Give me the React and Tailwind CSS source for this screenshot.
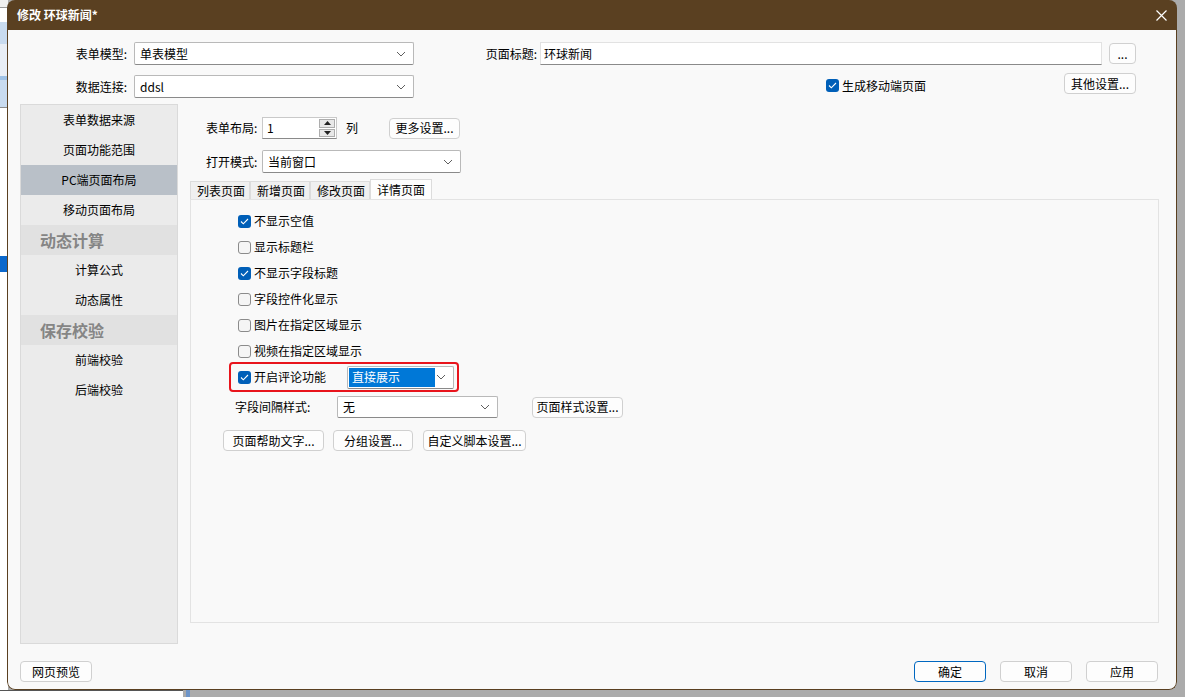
import React from 'react';

const Chevron = () => (
  <svg width="10" height="6" viewBox="0 0 10 6" className="shrink-0">
    <polyline points="1,1 5,5 9,1" fill="none" stroke="#5f5f5f" strokeWidth="1" />
  </svg>
);

const Check = ({ checked }) =>
  checked ? (
    <span className="w-[13px] h-[13px] rounded-[3px] bg-[#005fb8] flex items-center justify-center shrink-0">
      <svg width="9" height="7" viewBox="0 0 9 7">
        <polyline points="1,3.5 3.3,5.8 8,1" fill="none" stroke="#ffffff" strokeWidth="1.1" />
      </svg>
    </span>
  ) : (
    <span className="w-[13px] h-[13px] rounded-[3px] border border-[#8b8b8b] bg-[#f5f5f5] shrink-0" />
  );

const Select = ({ value, w, h = 'h-[23px]', children }) => (
  <div className={`${w} ${h} bg-white border border-[#b9b9b9] border-b-[#8a8a8a] rounded-[2px] flex items-center justify-between pl-[5px] pr-[7px] shrink-0`}>
    {children || <span>{value}</span>}
    <Chevron />
  </div>
);

const Btn = ({ children, w, primary }) => (
  <button
    className={`${w} h-[21px] rounded-[4px] bg-[#fdfdfd] border ${primary ? 'border-[#0067c0]' : 'border-[#d0d0d0]'} flex items-center justify-center text-[12px] text-black shrink-0`}
  >
    {children}
  </button>
);

const sideItems = [
  { t: '表单数据来源' },
  { t: '页面功能范围' },
  { t: 'PC端页面布局', active: true },
  { t: '移动页面布局' },
  { t: '动态计算', head: true },
  { t: '计算公式' },
  { t: '动态属性' },
  { t: '保存校验', head: true },
  { t: '前端校验' },
  { t: '后端校验' },
];

const checks = [
  { t: '不显示空值', c: true },
  { t: '显示标题栏', c: false },
  { t: '不显示字段标题', c: true },
  { t: '字段控件化显示', c: false },
  { t: '图片在指定区域显示', c: false },
  { t: '视频在指定区域显示', c: false },
];

export default function App() {
  return (
    <div
      className="w-[1185px] h-[697px] relative overflow-hidden bg-[#ababab] text-[12px] text-black"
      style={{ fontFamily: '"Noto Sans CJK SC", "Noto Sans", sans-serif' }}
    >
      {/* app behind the dialog */}
      <div className="absolute left-0 top-0 w-[8px] h-[697px] bg-white flex flex-col">
        <div className="h-[8px] border-b border-[#9a9a9a] bg-[#f0f0f0]" />
        <div className="h-[14px] bg-white" />
        <div className="h-[22px] bg-[#c9dbef]" />
        <div className="h-[32px] bg-[#e9eef5]" />
        <div className="h-[4px] bg-[#9fc2e6]" />
        <div className="h-[28px] bg-[#c9dbef] border-b border-[#8c8c8c]" />
        <div className="h-[148px] bg-white" />
        <div className="h-[16px] bg-[#0b68cc]" />
      </div>
      <div className="absolute left-0 top-[690px] w-[183px] h-[7px] bg-white border-t border-[#555]" />
      <div className="absolute left-[186px] top-[690px] w-[4px] h-[7px] bg-[#6e95c8]" />

      {/* dialog window */}
      <div className="absolute left-[7px] top-0 w-[1170px] h-[690px] flex flex-col rounded-t-[8px] rounded-b-[8px] overflow-hidden">
        <div className="h-[30px] bg-[#5a4021] flex items-center justify-between pl-[10px] pr-[10px] shrink-0">
          <span className="text-white font-bold text-[12px]">修改 环球新闻*</span>
          <svg width="11" height="11" viewBox="0 0 11 11">
            <path d="M0.5 0.5 L10.5 10.5 M10.5 0.5 L0.5 10.5" stroke="#ffffff" strokeWidth="1.2" />
          </svg>
        </div>

        <div className="flex-1 bg-[#f9f9f9] border-x border-b border-[#5a4021] rounded-b-[8px] flex flex-col pt-[12px]">
          {/* row 1 */}
          <div className="flex items-center h-[23px]">
            <span className="w-[119px] text-right">表单模型:</span>
            <span className="ml-[7px]"><Select value="单表模型" w="w-[280px]" /></span>
            <span className="w-[123px] text-right">页面标题:</span>
            <div className="ml-[3px] w-[562px] h-[23px] bg-white border border-[#e2e2e2] border-b-[#8a8a8a] flex items-center pl-[3px]">环球新闻</div>
            <span className="ml-[7px]"><Btn w="w-[27px]">...</Btn></span>
          </div>
          {/* row 2 */}
          <div className="flex items-start h-[23px] mt-[10px]">
            <span className="w-[119px] text-right leading-[23px]">数据连接:</span>
            <span className="ml-[7px]"><Select value="ddsl" w="w-[280px]" /></span>
            <span className="ml-[412px] mt-[4px] flex items-center gap-[3px]">
              <Check checked />
              <span className="leading-[13px]">生成移动端页面</span>
            </span>
            <span className="ml-[138px] -mt-[2px]"><Btn w="w-[72px]">其他设置...</Btn></span>
          </div>

          {/* middle */}
          <div className="flex mt-[6px] pl-[12px]">
            <div className="w-[158px] h-[540px] bg-[#ebebeb] border border-[#dadada] flex flex-col shrink-0">
              {sideItems.map((it) =>
                it.head ? (
                  <div key={it.t} className="h-[30px] bg-[#e1e1e1] flex items-center pl-[19px] text-[16px] font-bold text-[#858585]">
                    {it.t}
                  </div>
                ) : (
                  <div key={it.t} className={`h-[30px] flex items-center justify-center ${it.active ? 'bg-[#b9c0c8]' : ''}`}>
                    {it.t}
                  </div>
                )
              )}
            </div>

            <div className="ml-[12px] w-[969px] flex flex-col">
              <div className="flex items-center h-[22px] mt-[13px]">
                <span className="w-[72px] pl-[16px]">表单布局:</span>
                <div className="w-[75px] h-[22px] bg-white border border-[#c9c9c9] border-b-[#8a8a8a] flex items-center">
                  <span className="flex-1 pl-[4px]">1</span>
                  <div className="w-[18px] h-full flex flex-col gap-[1px] p-[1px]">
                    <div className="flex-1 bg-[#e8e8e8] border border-[#adadad] flex items-center justify-center">
                      <svg width="7" height="4" viewBox="0 0 7 4"><polygon points="0,4 3.5,0 7,4" fill="#222" /></svg>
                    </div>
                    <div className="flex-1 bg-[#e8e8e8] border border-[#adadad] flex items-center justify-center">
                      <svg width="7" height="4" viewBox="0 0 7 4"><polygon points="0,0 3.5,4 7,0" fill="#222" /></svg>
                    </div>
                  </div>
                </div>
                <span className="w-[52px] pl-[9px]">列</span>
                <Btn w="w-[71px]">更多设置...</Btn>
              </div>

              <div className="flex items-center h-[23px] mt-[11px]">
                <span className="w-[72px] pl-[16px]">打开模式:</span>
                <Select value="当前窗口" w="w-[199px]" />
              </div>

              <div className="flex items-end h-[20px] mt-[6px]">
                {['列表页面', '新增页面', '修改页面'].map((t) => (
                  <div key={t} className="w-[60px] h-[18px] bg-[#f0f0f0] border border-b-0 border-[#dcdcdc] flex items-center pl-[6px] leading-none">
                    {t}
                  </div>
                ))}
                <div className="w-[62px] h-[20px] bg-[#fdfdfd] border border-b-0 border-[#dcdcdc] flex items-center pl-[6px] leading-none">
                  详情页面
                </div>
              </div>

              <div className="h-[424px] border border-[#e3e3e3] bg-[#f9f9f9] flex flex-col pt-[8px]">
                {checks.map((c) => (
                  <div key={c.t} className="h-[26px] flex items-center pl-[47px] gap-[3px]">
                    <Check checked={c.c} />
                    <span>{c.t}</span>
                  </div>
                ))}
                <div className="h-[26px] flex items-center pl-[47px]">
                  <div className="relative flex items-center gap-[3px]">
                    <div className="absolute left-[-9px] top-[-4px] w-[230px] h-[30px] border-2 border-[#e8141c] rounded-[4px]" />
                    <Check checked />
                    <span className="w-[90px]">开启评论功能</span>
                    <div className="w-[107px] h-[23px] bg-white border border-[#b9b9b9] border-b-[#8a8a8a] rounded-[2px] flex items-center justify-between pl-[1px] pr-[7px]">
                      <span className="w-[86px] h-[19px] bg-[#0078d7] text-white flex items-center pl-[3px]">直接展示</span>
                      <Chevron />
                    </div>
                  </div>
                </div>

                <div className="flex items-center h-[22px] mt-[6px] pl-[44px]">
                  <span className="w-[102px]">字段间隔样式:</span>
                  <Select value="无" w="w-[161px]" h="h-[22px]" />
                  <span className="ml-[34px]"><Btn w="w-[91px]">页面样式设置...</Btn></span>
                </div>

                <div className="flex items-center mt-[12px] pl-[32px] gap-[9px]">
                  <Btn w="w-[101px]">页面帮助文字...</Btn>
                  <Btn w="w-[80px]">分组设置...</Btn>
                  <span className="ml-[1px]"><Btn w="w-[103px]">自定义脚本设置...</Btn></span>
                </div>
              </div>
            </div>
          </div>

          {/* bottom buttons */}
          <div className="flex items-center mt-[17px] pl-[12px] pr-[18px]">
            <Btn w="w-[72px]">网页预览</Btn>
            <div className="ml-auto flex gap-[14px]">
              <Btn w="w-[72px]" primary>确定</Btn>
              <Btn w="w-[72px]">取消</Btn>
              <Btn w="w-[72px]">应用</Btn>
            </div>
          </div>
        </div>
      </div>
    </div>
  );
}
